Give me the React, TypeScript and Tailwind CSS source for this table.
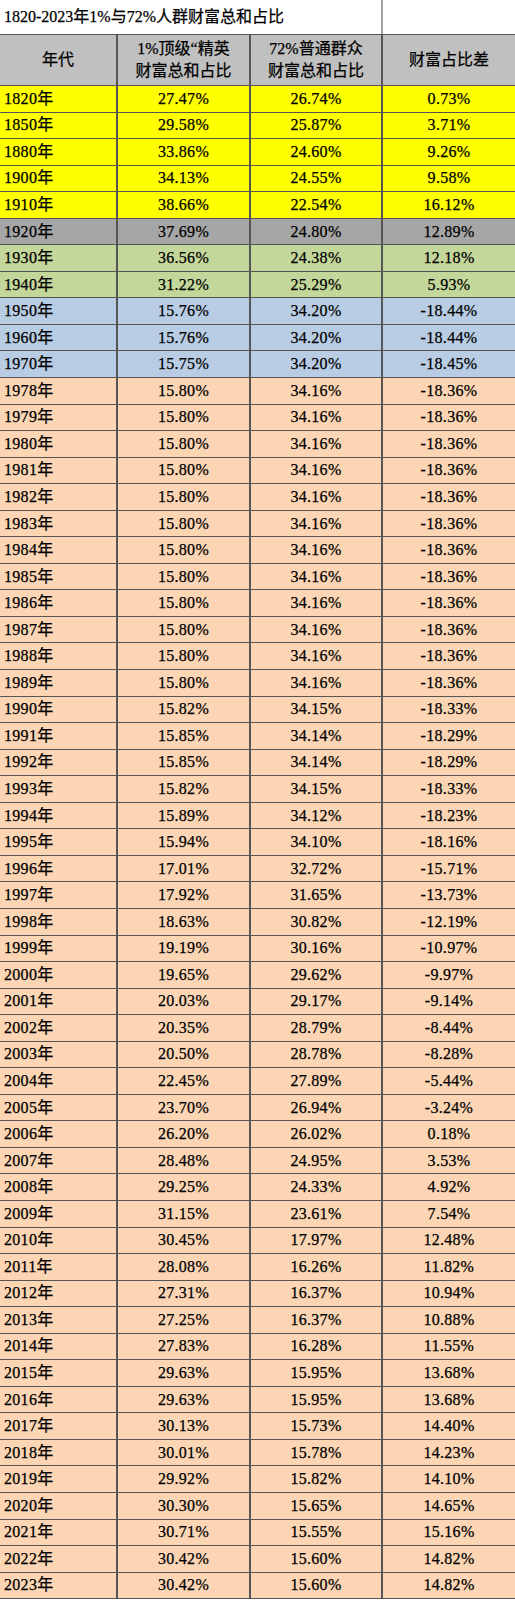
import React from 'react';

type Row = [string, string, string, string, string];

// bg per era: y yellow, g grey, l green, b blue, p peach
const rows: Row[] = [
  ['1820', '27.47%', '26.74%', '0.73%', 'y'],
  ['1850', '29.58%', '25.87%', '3.71%', 'y'],
  ['1880', '33.86%', '24.60%', '9.26%', 'y'],
  ['1900', '34.13%', '24.55%', '9.58%', 'y'],
  ['1910', '38.66%', '22.54%', '16.12%', 'y'],
  ['1920', '37.69%', '24.80%', '12.89%', 'g'],
  ['1930', '36.56%', '24.38%', '12.18%', 'l'],
  ['1940', '31.22%', '25.29%', '5.93%', 'l'],
  ['1950', '15.76%', '34.20%', '-18.44%', 'b'],
  ['1960', '15.76%', '34.20%', '-18.44%', 'b'],
  ['1970', '15.75%', '34.20%', '-18.45%', 'b'],
  ['1978', '15.80%', '34.16%', '-18.36%', 'p'],
  ['1979', '15.80%', '34.16%', '-18.36%', 'p'],
  ['1980', '15.80%', '34.16%', '-18.36%', 'p'],
  ['1981', '15.80%', '34.16%', '-18.36%', 'p'],
  ['1982', '15.80%', '34.16%', '-18.36%', 'p'],
  ['1983', '15.80%', '34.16%', '-18.36%', 'p'],
  ['1984', '15.80%', '34.16%', '-18.36%', 'p'],
  ['1985', '15.80%', '34.16%', '-18.36%', 'p'],
  ['1986', '15.80%', '34.16%', '-18.36%', 'p'],
  ['1987', '15.80%', '34.16%', '-18.36%', 'p'],
  ['1988', '15.80%', '34.16%', '-18.36%', 'p'],
  ['1989', '15.80%', '34.16%', '-18.36%', 'p'],
  ['1990', '15.82%', '34.15%', '-18.33%', 'p'],
  ['1991', '15.85%', '34.14%', '-18.29%', 'p'],
  ['1992', '15.85%', '34.14%', '-18.29%', 'p'],
  ['1993', '15.82%', '34.15%', '-18.33%', 'p'],
  ['1994', '15.89%', '34.12%', '-18.23%', 'p'],
  ['1995', '15.94%', '34.10%', '-18.16%', 'p'],
  ['1996', '17.01%', '32.72%', '-15.71%', 'p'],
  ['1997', '17.92%', '31.65%', '-13.73%', 'p'],
  ['1998', '18.63%', '30.82%', '-12.19%', 'p'],
  ['1999', '19.19%', '30.16%', '-10.97%', 'p'],
  ['2000', '19.65%', '29.62%', '-9.97%', 'p'],
  ['2001', '20.03%', '29.17%', '-9.14%', 'p'],
  ['2002', '20.35%', '28.79%', '-8.44%', 'p'],
  ['2003', '20.50%', '28.78%', '-8.28%', 'p'],
  ['2004', '22.45%', '27.89%', '-5.44%', 'p'],
  ['2005', '23.70%', '26.94%', '-3.24%', 'p'],
  ['2006', '26.20%', '26.02%', '0.18%', 'p'],
  ['2007', '28.48%', '24.95%', '3.53%', 'p'],
  ['2008', '29.25%', '24.33%', '4.92%', 'p'],
  ['2009', '31.15%', '23.61%', '7.54%', 'p'],
  ['2010', '30.45%', '17.97%', '12.48%', 'p'],
  ['2011', '28.08%', '16.26%', '11.82%', 'p'],
  ['2012', '27.31%', '16.37%', '10.94%', 'p'],
  ['2013', '27.25%', '16.37%', '10.88%', 'p'],
  ['2014', '27.83%', '16.28%', '11.55%', 'p'],
  ['2015', '29.63%', '15.95%', '13.68%', 'p'],
  ['2016', '29.63%', '15.95%', '13.68%', 'p'],
  ['2017', '30.13%', '15.73%', '14.40%', 'p'],
  ['2018', '30.01%', '15.78%', '14.23%', 'p'],
  ['2019', '29.92%', '15.82%', '14.10%', 'p'],
  ['2020', '30.30%', '15.65%', '14.65%', 'p'],
  ['2021', '30.71%', '15.55%', '15.16%', 'p'],
  ['2022', '30.42%', '15.60%', '14.82%', 'p'],
  ['2023', '30.42%', '15.60%', '14.82%', 'p'],
];

const bgFor: Record<string, string> = {
  y: 'bg-[#ffff00]',
  g: 'bg-[#a6a6a6]',
  l: 'bg-[#c4d79b]',
  b: 'bg-[#b8cce4]',
  p: 'bg-[#fcd5b4]',
};

const cols = 'grid grid-cols-[118px_133px_132px_1fr]';
const cell = 'flex items-center justify-center border-r-2 border-[#555]';

export default function App(): React.JSX.Element {
  return (
    <div className="w-[515px] bg-white text-[16px] leading-none text-black [-webkit-text-stroke:0.25px_#000] [font-family:'Liberation_Serif','Noto_Sans_CJK_SC',serif]">
      <div className="grid h-[35px] grid-cols-[383px_1fr] border-b border-[#555]">
        <div className="flex items-center border-r-2 border-[#a0a0a0] pl-1">
          1820-2023年1%与72%人群财富总和占比
        </div>
        <div />
      </div>

      <div className={`${cols} h-[51px] border-b border-[#555] bg-[#c0c0c0] text-center leading-[22px]`}>
        <div className={cell}>年代</div>
        <div className={cell}>
          1%顶级“精英
          <br />
          财富总和占比
        </div>
        <div className={cell}>
          72%普通群众
          <br />
          财富总和占比
        </div>
        <div className="flex items-center justify-center">财富占比差</div>
      </div>

      {rows.map(([year, top, mid, diff, era]) => (
        <div
          key={year}
          className={`${cols} h-[26.55px] border-b border-[#555] tracking-[0.3px] ${bgFor[era]}`}
        >
          <div className="flex items-center border-r-2 border-[#555] pl-1">{year}年</div>
          <div className={cell}>{top}</div>
          <div className={cell}>{mid}</div>
          <div className="flex items-center justify-center">{diff}</div>
        </div>
      ))}
    </div>
  );
}
